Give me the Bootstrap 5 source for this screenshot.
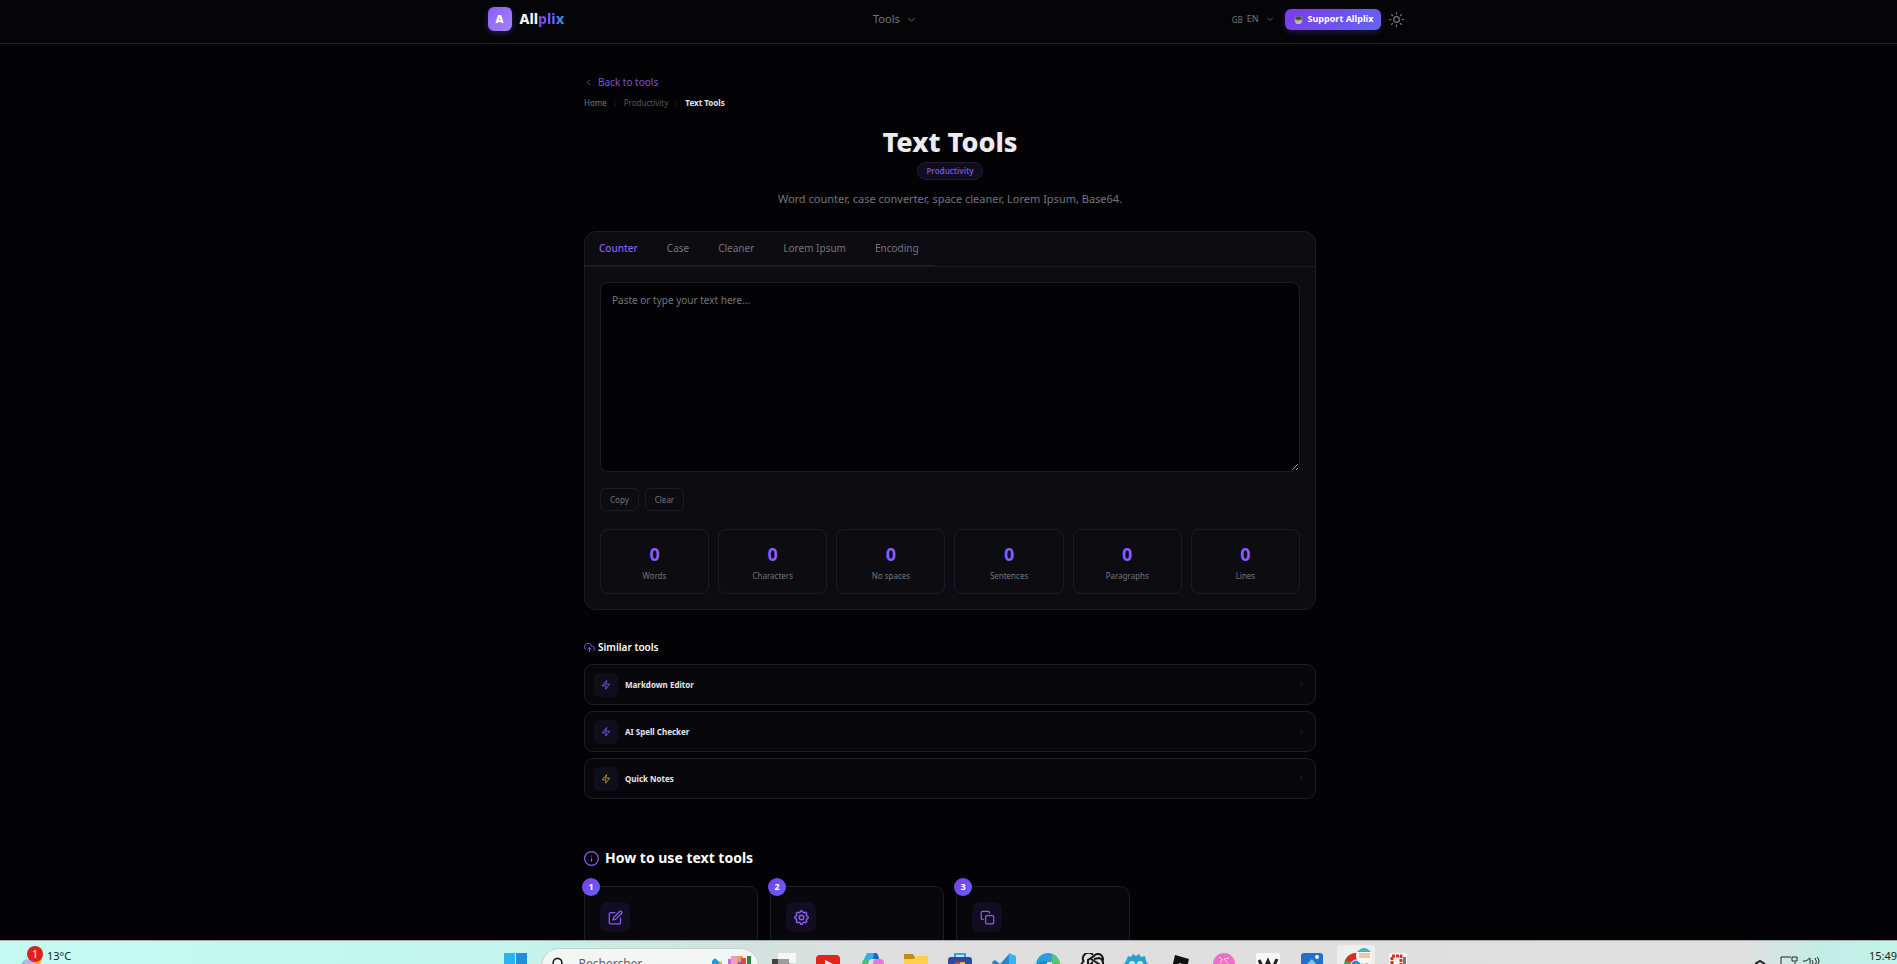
<!DOCTYPE html>
<html lang="en" data-bs-theme="dark">
<head>
<meta charset="utf-8">
<meta name="viewport" content="width=device-width, initial-scale=1">
<title>Text Tools - Allplix</title>
<link href="https://cdn.jsdelivr.net/npm/bootstrap@5.3.0/dist/css/bootstrap.min.css" rel="stylesheet">
<style>
:root{--line:#1e1c29;--violet:#8b5cf6;--grad:linear-gradient(135deg,#7c3aed,#6366f1);--dim:#74747c}
body{background:#030305;color:#ececf0;font-family:"Noto Sans","Open Sans",sans-serif;font-size:11px;line-height:16px}
a{text-decoration:none}
svg{display:block;flex:none}
.ico{fill:none;stroke:currentColor;stroke-width:2;stroke-linecap:round;stroke-linejoin:round}
.dim{color:var(--dim)}
.violet{color:var(--violet)}
.top-bar{background:#050508;border-bottom:1px solid var(--line);height:44px;flex:none}
.top-inner{max-width:922px;height:38px}
.logo-box{width:24px;height:24px;border-radius:6px;background:linear-gradient(135deg,#8b5cf6,#a584fb);box-shadow:0 2px 6px #8b5cf64d;font-size:11px;font-weight:900;color:#fff}
.logo-name{font-size:14px;font-weight:800;color:#f4f4f6}
.logo-name span{background:linear-gradient(90deg,#7c3aed,#6366f1 60%,#0ea5e9);background-clip:text;-webkit-background-clip:text;color:transparent}
.plain{background:none;border:0;padding:0}
.side{flex:1 1 0}
.region{font-size:8px;padding-top:2px}
.lang{font-size:9px}
.support{height:21px;border:0;border-radius:6px;background:var(--grad);color:#fff;font-size:9px;font-weight:700;padding:0 8px;box-shadow:0 2px 6px #7c3aed4d}
.theme-btn{padding-right:5px}
main{padding-left:3px}
.page-col{width:100%;max-width:732px;margin:0 auto}
.back{font-size:10px;color:#7a51dc;padding-left:2px;margin-top:30px;gap:7px}
.crumbs{font-size:8px;line-height:12px;margin-top:7px;gap:5px}
.crumbs b{color:#e6e6ea}
.crumbs .far{color:#55555e}
.crumbs svg{color:#2c2c35}
h1{font-size:27px;line-height:34px;font-weight:800;margin:16px 0 3px;color:#ececee}
.tag{font-size:8px;line-height:16px;font-weight:600;border:1px solid #211a3a;border-radius:9px;background:#110d1e;color:#7a51dc;padding:0 8px}
.lede{font-size:11px;line-height:18px;margin:10px 0 23px}
.panel{background:#0d0c11;border:1px solid var(--line);border-radius:12px}
.tabs-row{border-bottom:1px solid var(--line);height:35px;padding-right:15px}
.tabs-row button{background:none;border:0;border-bottom:1px solid var(--line);padding:0 15px 2px 14px;font-size:10px;color:var(--dim)}
.tabs-row button.active{color:var(--violet);font-weight:500}
.panel-body{padding:15px}
.panel textarea{height:190px;background:#030305;border:1px solid var(--line);border-radius:8px;font-size:10px;line-height:16px;padding:9px 11px;color:#ececf0;resize:vertical}
.panel textarea::placeholder{color:var(--dim)}
.btn-line{gap:6px}
.small-btn{height:23px;border:1px solid var(--line);border-radius:6px;background:#0d0c11;color:var(--dim);font-size:8px;padding:0 9px}
.stats{display:grid;grid-template-columns:repeat(6,1fr);gap:9px;margin-top:18px}
.stat{border:1px solid var(--line);border-radius:8px;height:65px;text-align:center;padding-top:12px}
.stat output{display:block;font-size:18px;line-height:24px;font-weight:700;color:var(--violet)}
.stat label{display:block;font-size:8px;line-height:12px;margin-top:4px;color:var(--dim)}
.sim-title{font-size:10px;line-height:16px;font-weight:600;margin:29px 0 9px;gap:3px}
.tool-row{height:41px;border:1px solid var(--line);border-radius:9px;background:#08070c;color:#e6e6ea;font-size:8px;font-weight:700;padding:0 11px 0 9px;margin-bottom:6px;gap:7px}
.chip{width:24px;height:24px;border-radius:6px;background:#110e1b}
.how-title{font-size:14px;line-height:20px;font-weight:700;margin:49px 0 18px;gap:6px}
.steps{display:grid;grid-template-columns:repeat(4,1fr);gap:12px}
.step{border:1px solid var(--line);border-radius:9px;background:#08070c;height:130px;padding:15px}
.step-no{position:absolute;left:-3px;top:-9px;width:18px;height:18px;border-radius:50%;background:var(--grad);color:#fff;font-size:9px;font-weight:700}
.step-chip{width:30px;height:30px;border-radius:7px;background:#130d22}
.taskbar{height:24px;flex:none;border-top:1px solid #a9a9ab;background:linear-gradient(90deg,#c4faf2 0,#c2f6ec 26%,#cfe3de 38%,#dedede 46%,#e0e0e0 92%,#c3ede4 96%,#c2f3e9 100%);color:#1d1d1f;font-family:"Noto Sans",sans-serif}
.tasks{margin-left:18px}
.slot{width:44px;height:24px;flex:none;display:flex;justify-content:center;align-items:flex-start;padding-top:12px}
.slot svg{width:24px;height:24px}
.hunt{width:218px;height:36px;margin:7px 3px 0;border:1px solid #c9cfce;border-radius:18px;background:#f2f6f5;padding:7px 0 0 10px}
.hunt input{width:100px;border:0;background:none;font-size:12px;line-height:16px;height:16px;padding:0;color:#5c5c5c}
.hunt input::placeholder{color:#5c5c5c}
.weather,.clock{line-height:14px;padding-top:8px}
.notice{position:absolute;left:27px;top:5px;width:16px;height:16px;border-radius:50%;background:#e0201b;color:#fff;font-size:10px}
</style>
</head>
<body class="vh-100 overflow-hidden d-flex flex-column">
<header class="top-bar">
  <div class="top-inner mx-auto d-flex align-items-center justify-content-between">
    <a href="#" class="d-inline-flex align-items-center gap-2"><span class="logo-box d-flex align-items-center justify-content-center">A</span><span class="logo-name">All<span>plix</span></span></a>
    <button class="plain dim d-flex align-items-center gap-2 pe-2" type="button">Tools <svg class="ico" width="7" height="7" viewBox="4 4 16 16"><path d="m5 9 7 7 7-7"/></svg></button>
    <div class="d-flex align-items-center">
      <button class="plain dim d-flex align-items-center me-2" type="button"><span class="region me-1">GB</span><span class="lang me-1">EN</span><svg class="ico ms-1" width="6" height="6" viewBox="4 4 16 16"><path d="m5 9 7 7 7-7"/></svg></button>
      <button class="support d-flex align-items-center gap-1 ms-1 me-2" type="button"><svg width="11" height="11" viewBox="0 0 12 12"><path d="M2 5h8v2a4 4 0 0 1-8 0z" fill="#b9b9bc"/><ellipse cx="6" cy="4.500" rx="4.500" ry="2.500" fill="#77777b"/><ellipse cx="6" cy="4.500" rx="3" ry="1.500" fill="#45464a"/></svg>Support Allplix</button>
      <button class="plain dim theme-btn" type="button" aria-label="Theme"><svg class="ico" width="15" height="15" viewBox="0 0 24 24" stroke-width="1.500"><circle cx="12" cy="12" r="4.500"/><path d="M12 1v2M12 21v2M4.200 4.200l1.500 1.500M18.300 18.300l1.500 1.500M1 12h2M21 12h2M4.200 19.800l1.500-1.500M18.300 5.700l1.500-1.500"/></svg></button>
    </div>
  </div>
</header>
<main class="flex-grow-1 overflow-hidden">
  <div class="page-col">
    <a href="#" class="back d-flex align-items-center"><svg class="ico" width="5" height="7" viewBox="5 3 12 18" stroke-width="3"><path d="m14 6-6 6 6 6"/></svg>Back to tools</a>
    <nav class="crumbs d-flex align-items-center" aria-label="Breadcrumb"><a href="#" class="dim">Home</a><svg class="ico" width="7" height="7" viewBox="0 0 24 24"><path d="m9 5 7 7-7 7"/></svg><a href="#" class="far">Productivity</a><svg class="ico" width="7" height="7" viewBox="0 0 24 24"><path d="m9 5 7 7-7 7"/></svg><b>Text Tools</b></nav>
    <div class="d-flex flex-column align-items-center">
      <h1>Text Tools</h1>
      <span class="tag">Productivity</span>
      <p class="lede dim">Word counter, case converter, space cleaner, Lorem Ipsum, Base64.</p>
    </div>
    <section class="panel">
      <div class="tabs-row d-flex" role="tablist"><button class="active" type="button">Counter</button><button type="button">Case</button><button type="button">Cleaner</button><button type="button">Lorem Ipsum</button><button type="button">Encoding</button></div>
      <div class="panel-body">
        <textarea class="d-block w-100" aria-label="Text" placeholder="Paste or type your text here..."></textarea>
        <div class="btn-line d-flex mt-3"><button class="small-btn" type="button">Copy</button><button class="small-btn" type="button">Clear</button></div>
        <div class="stats">
          <div class="stat"><output id="s1">0</output><label for="s1">Words</label></div>
          <div class="stat"><output id="s2">0</output><label for="s2">Characters</label></div>
          <div class="stat"><output id="s3">0</output><label for="s3">No spaces</label></div>
          <div class="stat"><output id="s4">0</output><label for="s4">Sentences</label></div>
          <div class="stat"><output id="s5">0</output><label for="s5">Paragraphs</label></div>
          <div class="stat"><output id="s6">0</output><label for="s6">Lines</label></div>
        </div>
      </div>
    </section>
    <h2 class="sim-title d-flex align-items-center"><svg class="ico violet" width="11" height="11" viewBox="0 0 24 24"><path d="m16 16-4-4-4 4M12 12v9M20.390 18.390A5 5 0 0 0 18 9h-1.260A8 8 0 1 0 3 16.300"/></svg>Similar tools</h2>
    <a href="#" class="tool-row d-flex align-items-center"><span class="chip violet d-flex align-items-center justify-content-center"><svg class="ico" width="10" height="10" viewBox="0 0 24 24"><path d="M13 2 3 14h9l-1 8 10-12h-9z"/></svg></span>Markdown Editor<svg class="ico ms-auto" color="#34343f" width="5" height="5" viewBox="4 4 16 16"><path d="m8 5 7 7-7 7"/></svg></a>
    <a href="#" class="tool-row d-flex align-items-center"><span class="chip violet d-flex align-items-center justify-content-center"><svg class="ico" width="10" height="10" viewBox="0 0 24 24"><path d="M13 2 3 14h9l-1 8 10-12h-9z"/></svg></span>AI Spell Checker<svg class="ico ms-auto" color="#34343f" width="5" height="5" viewBox="4 4 16 16"><path d="m8 5 7 7-7 7"/></svg></a>
    <a href="#" class="tool-row d-flex align-items-center"><span class="chip d-flex align-items-center justify-content-center"><svg class="ico" color="#d9a514" width="10" height="10" viewBox="0 0 24 24"><path d="M13 2 3 14h9l-1 8 10-12h-9z"/></svg></span>Quick Notes<svg class="ico ms-auto" color="#34343f" width="5" height="5" viewBox="4 4 16 16"><path d="m8 5 7 7-7 7"/></svg></a>
    <h2 class="how-title d-flex align-items-center"><svg class="ico violet" width="15" height="15" viewBox="0 0 24 24"><circle cx="12" cy="12" r="11"/><path d="M12 16v-4M12 8v.1"/></svg>How to use text tools</h2>
    <div class="steps">
      <div class="step position-relative"><span class="step-no d-flex align-items-center justify-content-center">1</span><span class="step-chip violet d-flex align-items-center justify-content-center"><svg class="ico" width="15" height="15" viewBox="0 0 24 24"><path d="M11 4H4a2 2 0 0 0-2 2v14a2 2 0 0 0 2 2h14a2 2 0 0 0 2-2v-7"/><path d="M18.500 2.500a2.120 2.120 0 0 1 3 3L12 15l-4 1 1-4z"/></svg></span></div>
      <div class="step position-relative"><span class="step-no d-flex align-items-center justify-content-center">2</span><span class="step-chip violet d-flex align-items-center justify-content-center"><svg class="ico" width="15" height="15" viewBox="2 2 20 20"><path d="M10.325 4.317c.426-1.756 2.924-1.756 3.350 0a1.724 1.724 0 0 0 2.573 1.066c1.543-.94 3.310.826 2.370 2.370a1.724 1.724 0 0 0 1.065 2.572c1.756.426 1.756 2.924 0 3.350a1.724 1.724 0 0 0-1.066 2.573c.94 1.543-.826 3.310-2.370 2.370a1.724 1.724 0 0 0-2.572 1.065c-.426 1.756-2.924 1.756-3.350 0a1.724 1.724 0 0 0-2.573-1.066c-1.543.94-3.310-.826-2.370-2.370a1.724 1.724 0 0 0-1.065-2.572c-1.756-.426-1.756-2.924 0-3.350a1.724 1.724 0 0 0 1.066-2.573c-.94-1.543.826-3.310 2.370-2.370.996.608 2.296.07 2.572-1.065z"/><circle cx="12" cy="12" r="3"/></svg></span></div>
      <div class="step position-relative"><span class="step-no d-flex align-items-center justify-content-center">3</span><span class="step-chip violet d-flex align-items-center justify-content-center"><svg class="ico" width="15" height="15" viewBox="0 0 24 24"><rect x="9" y="9" width="13" height="13" rx="2"/><path d="M5 15H4a2 2 0 0 1-2-2V4a2 2 0 0 1 2-2h9a2 2 0 0 1 2 2v1"/></svg></span></div>
    </div>
  </div>
</main>
<footer class="taskbar d-flex overflow-hidden position-relative">
  <div class="side d-flex"><svg class="ms-3 mt-3" width="31" height="16" viewBox="0 0 31 16"><circle cx="20" cy="2" r="6" fill="#f0b429"/><circle cx="12" cy="9" r="7" fill="#a9b9e8"/><circle cx="6" cy="13" r="5" fill="#b9c9ee"/></svg><span class="notice d-flex align-items-center justify-content-center">1</span><span class="weather">13°C</span></div>
  <div class="tasks d-flex">
    <span class="slot"><svg viewBox="0 0 24 24"><path fill="#2bb3f0" d="M0 0h11v11H0z"/><path fill="#1f8fdc" d="M12 0h11v11H12z"/></svg></span>
    <div class="hunt d-flex"><svg class="ico me-2 pe-1" width="19" height="15" viewBox="0 0 19 15"><circle cx="7" cy="6.500" r="5.500"/><path d="m11 10 4 4"/></svg><input type="search" aria-label="Rechercher" placeholder="Rechercher"><svg class="ms-auto me-1" width="44" height="20" viewBox="0 0 44 20"><path fill="#249ade" d="M2 5q3-5 6 0l3 2-1 6H2z"/><path fill="#f5aa35" d="m8 8 4-3v5z"/><path fill="#c56cd0" d="M18 3h5v17h-5z"/><path fill="#f59ac6" d="M21 0h6v20h-6z"/><path fill="#e9a23b" d="M27-2h6v22h-6z"/><path fill="#d84c4c" d="M31 2h5v18h-5z"/><path fill="#38813f" d="M37 0h4v20h-4z"/><path fill="#8b54bc" d="M28 6h3v14h-3z"/></svg></div>
    <span class="slot"><svg viewBox="0 0 24 24"><path fill="#444" d="M0 6h15v15H0z"/><path fill="#9c9c9c" d="M6 6h12v15H6z"/><path fill="#f6f6f6" d="M6 0h18v10h-7V6H6z"/></svg></span>
    <span class="slot"><svg viewBox="0 0 24 24"><rect y="2" width="24" height="18" rx="4" fill="#e32417"/><path fill="#fff" d="m9 7 8 4-8 5z"/></svg></span>
    <span class="slot"><svg viewBox="0 0 24 24"><path fill="#35b0e6" d="M7 0h8q3 0 4 6h-8l-5 4H2z"/><path fill="#1c68bd" d="M14 0h2q2 0 3 6h-6z"/><path fill="#50be75" d="M3 7h6l-3 14H0z"/><rect x="13" y="6" width="11" height="14" rx="4" fill="#e678d8"/></svg></span>
    <span class="slot"><svg viewBox="0 0 24 24"><path fill="#c18f0e" d="M0 1h9l2 3v4H0z"/><path fill="#ffcf4d" d="M0 6h10l2-3h12v18H0z"/></svg></span>
    <span class="slot"><svg viewBox="0 0 24 24"><path d="M7 6V1h10v5" fill="none" stroke="#26aaf0" stroke-width="2"/><rect y="4" width="24" height="18" rx="3" fill="#2b4ba0"/><path fill="#e03c28" d="M7 9h5v8H7z"/><path fill="#f0b52c" d="M12 9h5v8h-5z"/></svg></span>
    <span class="slot"><svg viewBox="0 0 24 24"><path fill="#2687cf" d="m0 9 3-2 5 4L18 0v10L4 22z"/><path fill="#35b4ef" d="m17 0 7 3v19h-7z"/></svg></span>
    <span class="slot"><svg viewBox="0 0 24 24"><circle cx="12" cy="12" r="12" fill="#2c9ddd"/><path fill="#59c36d" d="M16 1a12 12 0 0 1 8 14h-8z"/><path fill="#2384cf" d="M0 12a12 12 0 0 1 14-3l-6 14z"/><path fill="#dedede" d="M11 9h5v8h-6z"/></svg></span>
    <span class="slot"><svg viewBox="0 0 24 24" fill="none" stroke="#171717" stroke-width="2"><path d="M4 9a5 5 0 0 1 9-7M8 14V7l6-4a5 5 0 0 1 8 6M4 8a5 5 0 0 0-1 8M12 20V10l-4 3M11 6l8 5v8M14 6l5-1a5 5 0 0 1 3 8"/></svg></span>
    <span class="slot"><svg viewBox="0 0 24 24"><path fill="#2aa0cf" d="M2 8 4 3l3 1 2-3 3 2 3-2 2 3 4-1 1 5 2 3-2 2v11H2V13l-2-2z"/><circle cx="8" cy="11" r="3" fill="#c9edf8"/><circle cx="16" cy="11" r="3" fill="#c9edf8"/></svg></span>
    <span class="slot"><svg viewBox="0 0 24 24"><path fill="#111" d="m7 2 14 4-4 17-14-4z"/><path fill="#ddd" d="m11 10 4 1-1 4-4-1z"/></svg></span>
    <span class="slot"><svg viewBox="0 0 24 24"><circle cx="12" cy="11" r="11" fill="#ee70c5"/><path d="m7 4 4 3M12 6l5-1M12 6l4 4M10 7l-2 3" stroke="#fbd4ee" stroke-width="1"/></svg></span>
    <span class="slot"><svg viewBox="0 0 24 24"><rect width="24" height="24" rx="2" fill="#f7f7f7"/><path d="m3 7 5 10 4-9 4 9 5-11" fill="none" stroke="#222" stroke-width="3"/></svg></span>
    <span class="slot"><svg viewBox="0 0 24 24"><rect x="1" width="22" height="24" rx="3" fill="#246fca"/><circle cx="17" cy="4" r="2" fill="#fff"/><path fill="#7ac7f7" d="m3 15 9-9 10 12z"/></svg></span>
    <span class="slot"><svg viewBox="0 0 24 24" overflow="visible"><rect x="-7" y="-8" width="38" height="34" rx="4" fill="#eeeeee"/><circle cx="12" cy="12" r="12" fill="#31a354"/><path fill="#e12a1e" d="M1 8A12 12 0 0 1 20 3l-5 6z"/><circle cx="12" cy="12" r="5" fill="#2b83ec" stroke="#fff"/><circle cx="20" cy="3" r="8" fill="#f7f7f7"/><path fill="#45b3ba" d="M13-1q7-8 14 0z"/><path fill="#ecc9a0" d="M15 0h11v5H15z"/></svg></span>
    <span class="slot"><svg viewBox="0 0 24 24"><rect x="1" width="18" height="24" rx="2" fill="#f7f7f7"/><path d="M4 15V3h9v12" fill="none" stroke="#df2b22" stroke-width="3" stroke-dasharray="3 1"/><path fill="#777" d="M15 4h3v12h-3z"/></svg></span>
  </div>
  <div class="side d-flex justify-content-end"><svg width="66" height="23" viewBox="0 0 66 23" class="me-5" fill="none" stroke="#242428"><path stroke-width="2" d="m0 23 5-3 5 3"/><path d="M36 16H26v9M40 21v4M37 16h5v4h-5zM48 20h3l4-3v8M57 19q2 3 0 5M60 17q3 4 0 7M62 16q4 4 0 8"/></svg><time class="clock">15:49</time></div>
</footer>
<script src="https://cdn.jsdelivr.net/npm/bootstrap@5.3.0/dist/js/bootstrap.bundle.min.js"></script>
</body>
</html>
